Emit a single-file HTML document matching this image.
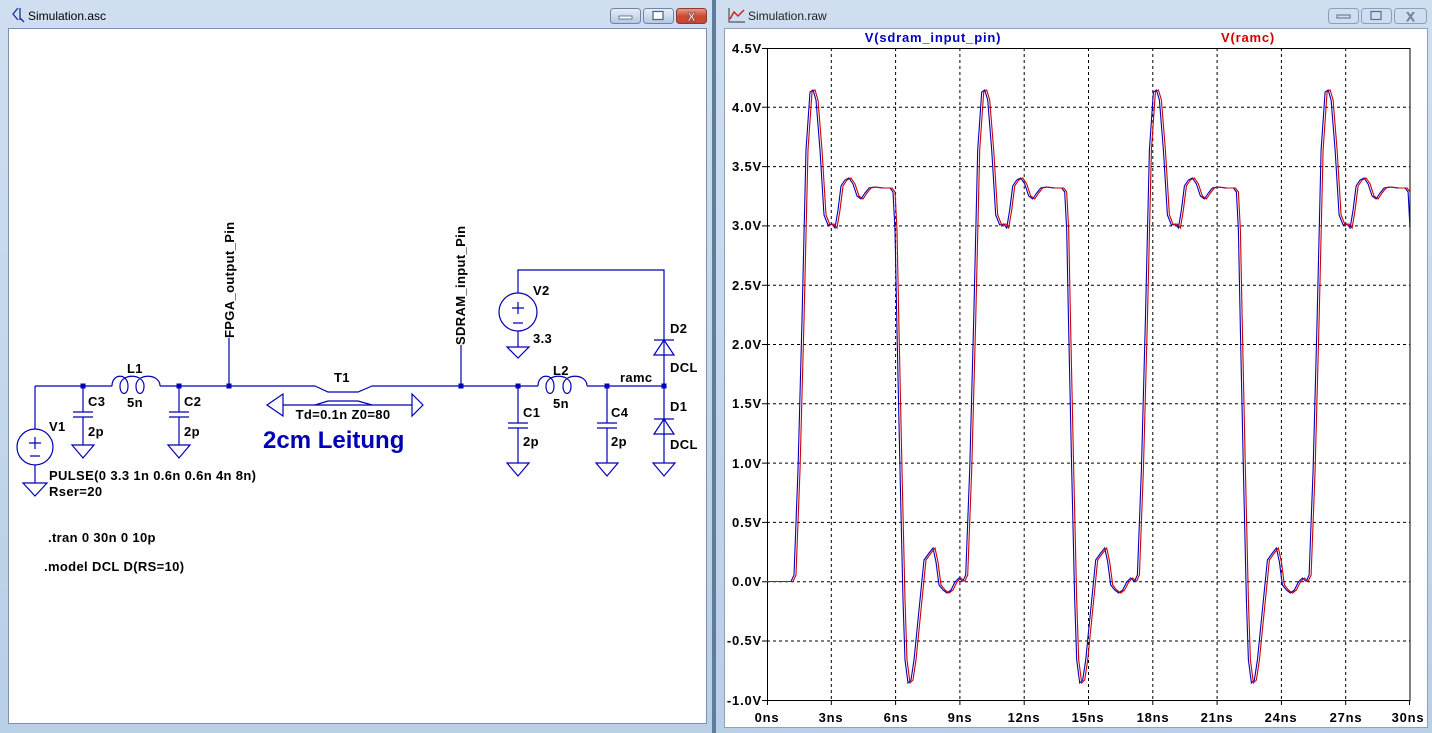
<!DOCTYPE html>
<html><head><meta charset="utf-8"><style>
html,body{margin:0;padding:0;width:1432px;height:733px;overflow:hidden;background:#c3d6eb}
svg{display:block}
.s{font-family:"Liberation Sans",sans-serif;font-weight:bold;font-size:13px;letter-spacing:0.35px;fill:#000}
.ax{font-family:"Liberation Sans",sans-serif;font-weight:bold;font-size:13px;letter-spacing:0.8px;fill:#000}
</style></head><body>
<svg width="1432" height="733" viewBox="0 0 1432 733" xmlns="http://www.w3.org/2000/svg">
<defs>
<linearGradient id="fr" x1="0" y1="0" x2="0" y2="1"><stop offset="0" stop-color="#cfdff0"/><stop offset="1" stop-color="#b9cfe6"/></linearGradient>
<linearGradient id="btn" x1="0" y1="0" x2="0" y2="1"><stop offset="0" stop-color="#e6eef8"/><stop offset="1" stop-color="#b4c8df"/></linearGradient>
<linearGradient id="cls" x1="0" y1="0" x2="0" y2="1"><stop offset="0" stop-color="#e8a08e"/><stop offset="0.5" stop-color="#cc4a34"/><stop offset="1" stop-color="#c24a36"/></linearGradient>
<clipPath id="pc"><rect x="767" y="40" width="643" height="661"/></clipPath>
</defs>
<rect x="0" y="0" width="712" height="733" fill="url(#fr)"/>
<rect x="712" y="0" width="4" height="733" fill="#5f7c9c"/>
<rect x="716" y="0" width="716" height="733" fill="url(#fr)"/>
<rect x="8.5" y="28.5" width="698" height="695" fill="#fff" stroke="#7a92ae"/>
<g transform="translate(10,6)" stroke="#1830a0" fill="none" stroke-width="1.3"><path d="M8 2 L3 8 L8 14"/><path d="M10 2 V14"/><path d="M10 12 L14 16"/></g>
<text x="28" y="20" font-family="Liberation Sans,sans-serif" font-size="12" fill="#000">Simulation.asc</text>
<rect x="610.5" y="8.5" width="30" height="15" rx="3" fill="url(#btn)" stroke="#6e86a4"/>
<rect x="619" y="16" width="13" height="3" fill="#fff" stroke="#4c607a" stroke-width="0.8"/>
<rect x="643.5" y="8.5" width="30" height="15" rx="3" fill="url(#btn)" stroke="#6e86a4"/>
<rect x="653" y="11.5" width="10" height="8" fill="#fff" stroke="#4c607a" stroke-width="1.2"/>
<rect x="676.5" y="8.5" width="30" height="15" rx="3" fill="url(#cls)" stroke="#8a3a2e"/>
<text x="691.5" y="21" text-anchor="middle" font-family="Liberation Sans,sans-serif" font-weight="bold" font-size="12" fill="#fff" stroke="#5a2a20" stroke-width="0.5">X</text>
<rect x="724.5" y="28.5" width="703" height="699" fill="#fff" stroke="#8ea2bb"/>
<g transform="translate(728,7)"><path d="M1 1V15H17" stroke="#333" fill="none"/><path d="M2 12 L6 5 L10 9 L16 3" stroke="#d02020" fill="none" stroke-width="1.5"/></g>
<text x="748" y="20" font-family="Liberation Sans,sans-serif" font-size="12" fill="#222">Simulation.raw</text>
<g fill="none" stroke="#8aa0bb"><rect x="1328.5" y="8.5" width="30" height="15" rx="3"/><rect x="1361.5" y="8.5" width="30" height="15" rx="3"/><rect x="1394.5" y="8.5" width="32" height="15" rx="3"/></g>
<rect x="1337" y="15" width="13" height="3" fill="none" stroke="#5a6e88"/>
<rect x="1371" y="11.5" width="10" height="8" fill="none" stroke="#5a6e88" stroke-width="1.2"/>
<text x="1410.5" y="21" text-anchor="middle" font-family="Liberation Sans,sans-serif" font-size="12" fill="#fff" stroke="#5a6e88" stroke-width="0.8">X</text>

<g stroke="#0000b4" stroke-width="1.2" fill="none">
<path d="M35 386 H112 M160 386 H315 M372 386 H538 M587 386 H664"/>
<path d="M35 386 V429 M35 465 V483"/>
<circle cx="35" cy="447" r="18"/>
<path d="M35 437 V449 M29 443 H41 M30 456 H40"/>
<path d="M23 483 H47 L35 496 Z"/>
<path d="M83 386 V412 M73 412 H93 M73 417 H93 M83 417 V445 M72 445 H94 L83 458 Z"/>
<path d="M179 386 V412 M169 412 H189 M169 417 H189 M179 417 V445 M168 445 H190 L179 458 Z"/>
<path d="M112 386 C112 373 128 373 128 386 C128 396 120 396 120 386 C120 373 144 373 144 386 C144 396 136 396 136 386 C136 373 160 373 160 386"/>
<path d="M229 338 V386"/>
<path d="M315 386 L328 392 H358 L372 386 M315 405 L328 401 H358 L372 405"/>
<path d="M283 405 H412 M267 405 L283 394 V416 Z M423 405 L412 394 V416 Z"/>
<path d="M461 345 V386"/>
<path d="M518 386 V423 M508 423 H528 M508 428 H528 M518 428 V463 M507 463 H529 L518 476 Z"/>
<path d="M538 386 C538 373 554 373 554 386 C554 396 546 396 546 386 C546 373 571 373 571 386 C571 396 563 396 563 386 C563 373 587 373 587 386"/>
<path d="M607 386 V423 M597 423 H617 M597 428 H617 M607 428 V463 M596 463 H618 L607 476 Z"/>
<path d="M664 386 V270 H518 V293 M518 331 V347 M507 347 H529 L518 358 Z"/>
<circle cx="518" cy="312" r="19"/>
<path d="M518 302 V314 M512 308 H524 M513 323 H523"/>
<path d="M654 340 H674 M664 340 L654 355 H674 Z"/>
<path d="M664 386 V463 M654 419 H674 M664 419 L654 434 H674 Z M653 463 H675 L664 476 Z"/>
</g>
<g fill="#0000b4">
<rect x="80.5" y="383.5" width="5" height="5"/><rect x="176.5" y="383.5" width="5" height="5"/><rect x="226.5" y="383.5" width="5" height="5"/>
<rect x="458.5" y="383.5" width="5" height="5"/><rect x="515.5" y="383.5" width="5" height="5"/><rect x="604.5" y="383.5" width="5" height="5"/><rect x="661.5" y="383.5" width="5" height="5"/>
</g>
<g class="s">
<text x="127" y="373">L1</text><text x="127" y="407">5n</text>
<text x="88" y="406">C3</text><text x="88" y="436">2p</text>
<text x="184" y="406">C2</text><text x="184" y="436">2p</text>
<text x="49" y="431">V1</text>
<text x="49" y="480">PULSE(0 3.3 1n 0.6n 0.6n 4n 8n)</text>
<text x="49" y="496">Rser=20</text>
<text x="48" y="542">.tran 0 30n 0 10p</text>
<text x="44" y="571">.model DCL D(RS=10)</text>
<text x="334" y="382">T1</text>
<text x="343" y="419" text-anchor="middle">Td=0.1n Z0=80</text>
<text transform="translate(234,338) rotate(-90)">FPGA_output_Pin</text>
<text transform="translate(465,345) rotate(-90)">SDRAM_input_Pin</text>
<text x="533" y="295">V2</text><text x="533" y="343">3.3</text>
<text x="553" y="375">L2</text><text x="553" y="408">5n</text>
<text x="523" y="417">C1</text><text x="523" y="446">2p</text>
<text x="611" y="417">C4</text><text x="611" y="446">2p</text>
<text x="620" y="382">ramc</text>
<text x="670" y="333">D2</text><text x="670" y="372">DCL</text>
<text x="670" y="411">D1</text><text x="670" y="449">DCL</text>
</g>
<text x="263" y="448" font-family="Liberation Sans,sans-serif" font-weight="bold" font-size="24" fill="#0000b4">2cm Leitung</text>

<g stroke="#000" stroke-dasharray="3,3" stroke-width="1">
<path d="M767 107.3H1410M767 166.6H1410M767 225.9H1410M767 285.2H1410M767 344.5H1410M767 403.8H1410M767 463.1H1410M767 522.4H1410M767 581.7H1410M767 641H1410"/>
<path d="M831.3 48V700M895.6 48V700M959.9 48V700M1024.2 48V700M1088.5 48V700M1152.8 48V700M1217.1 48V700M1281.4 48V700M1345.7 48V700"/>
</g>
<rect x="767.5" y="48.5" width="642.5" height="652" fill="none" stroke="#000"/>
<g stroke="#000"><path d="M762 48.5H767M762 107.3H767M762 166.6H767M762 225.9H767M762 285.2H767M762 344.5H767M762 403.8H767M762 463.1H767M762 522.4H767M762 581.7H767M762 641H767M762 700.5H767"/>
<path d="M767.5 700V705M831.3 700V705M895.6 700V705M959.9 700V705M1024.2 700V705M1088.5 700V705M1152.8 700V705M1217.1 700V705M1281.4 700V705M1345.7 700V705M1409.5 700V705"/></g>
<g class="ax" text-anchor="end">
<text x="762" y="53">4.5V</text><text x="762" y="112">4.0V</text><text x="762" y="171">3.5V</text><text x="762" y="230">3.0V</text><text x="762" y="290">2.5V</text><text x="762" y="349">2.0V</text><text x="762" y="408">1.5V</text><text x="762" y="468">1.0V</text><text x="762" y="527">0.5V</text><text x="762" y="586">0.0V</text><text x="762" y="645">-0.5V</text><text x="762" y="705">-1.0V</text>
</g>
<g class="ax" text-anchor="middle">
<text x="767" y="722">0ns</text><text x="831" y="722">3ns</text><text x="896" y="722">6ns</text><text x="960" y="722">9ns</text><text x="1024" y="722">12ns</text><text x="1088" y="722">15ns</text><text x="1153" y="722">18ns</text><text x="1217" y="722">21ns</text><text x="1281" y="722">24ns</text><text x="1346" y="722">27ns</text><text x="1408" y="722">30ns</text>
</g>
<text x="933" y="42" text-anchor="middle" class="ax" style="fill:#0000c0">V(sdram_input_pin)</text>
<text x="1248" y="42" text-anchor="middle" class="ax" style="fill:#d00000">V(ramc)</text>

<g clip-path="url(#pc)" fill="none" stroke-width="1.1">
<path d="M767 581.5H793" stroke="#d00000"/>
<g stroke="#0000c0" transform="translate(-2,0)">
<path id="per" d="M793 581.5 L796 575 L800 470 L804 320 L808 150 L812 92 L815 90 L818 100 L822 150 L826 215 L830 225 L834 224 L837 228 L840 210 L843 186 L847 180 L851 178 L855 184 L859 196 L863 199 L867 193 L871 188 L876 187 L884 188 L892 188 L895 192 L897 230 L899 330 L902 470 L905 600 L907 660 L910 683 L913 680 L916 660 L919 630 L922 600 L926 560 L931 553 L935 548 L938 562 L941 585 L945 590 L949 593 L953 590 L957 582 L961 578 L964.7 581.5"/>
<use href="#per" transform="translate(171.7,0)"/>
<use href="#per" transform="translate(343.4,0)"/>
<use href="#per" transform="translate(515.1,0)"/>
</g>
<g stroke="#d00000">
<use href="#per"/>
<use href="#per" transform="translate(171.7,0)"/>
<use href="#per" transform="translate(343.4,0)"/>
<use href="#per" transform="translate(515.1,0)"/>
</g>
</g>
</svg>
</body></html>
